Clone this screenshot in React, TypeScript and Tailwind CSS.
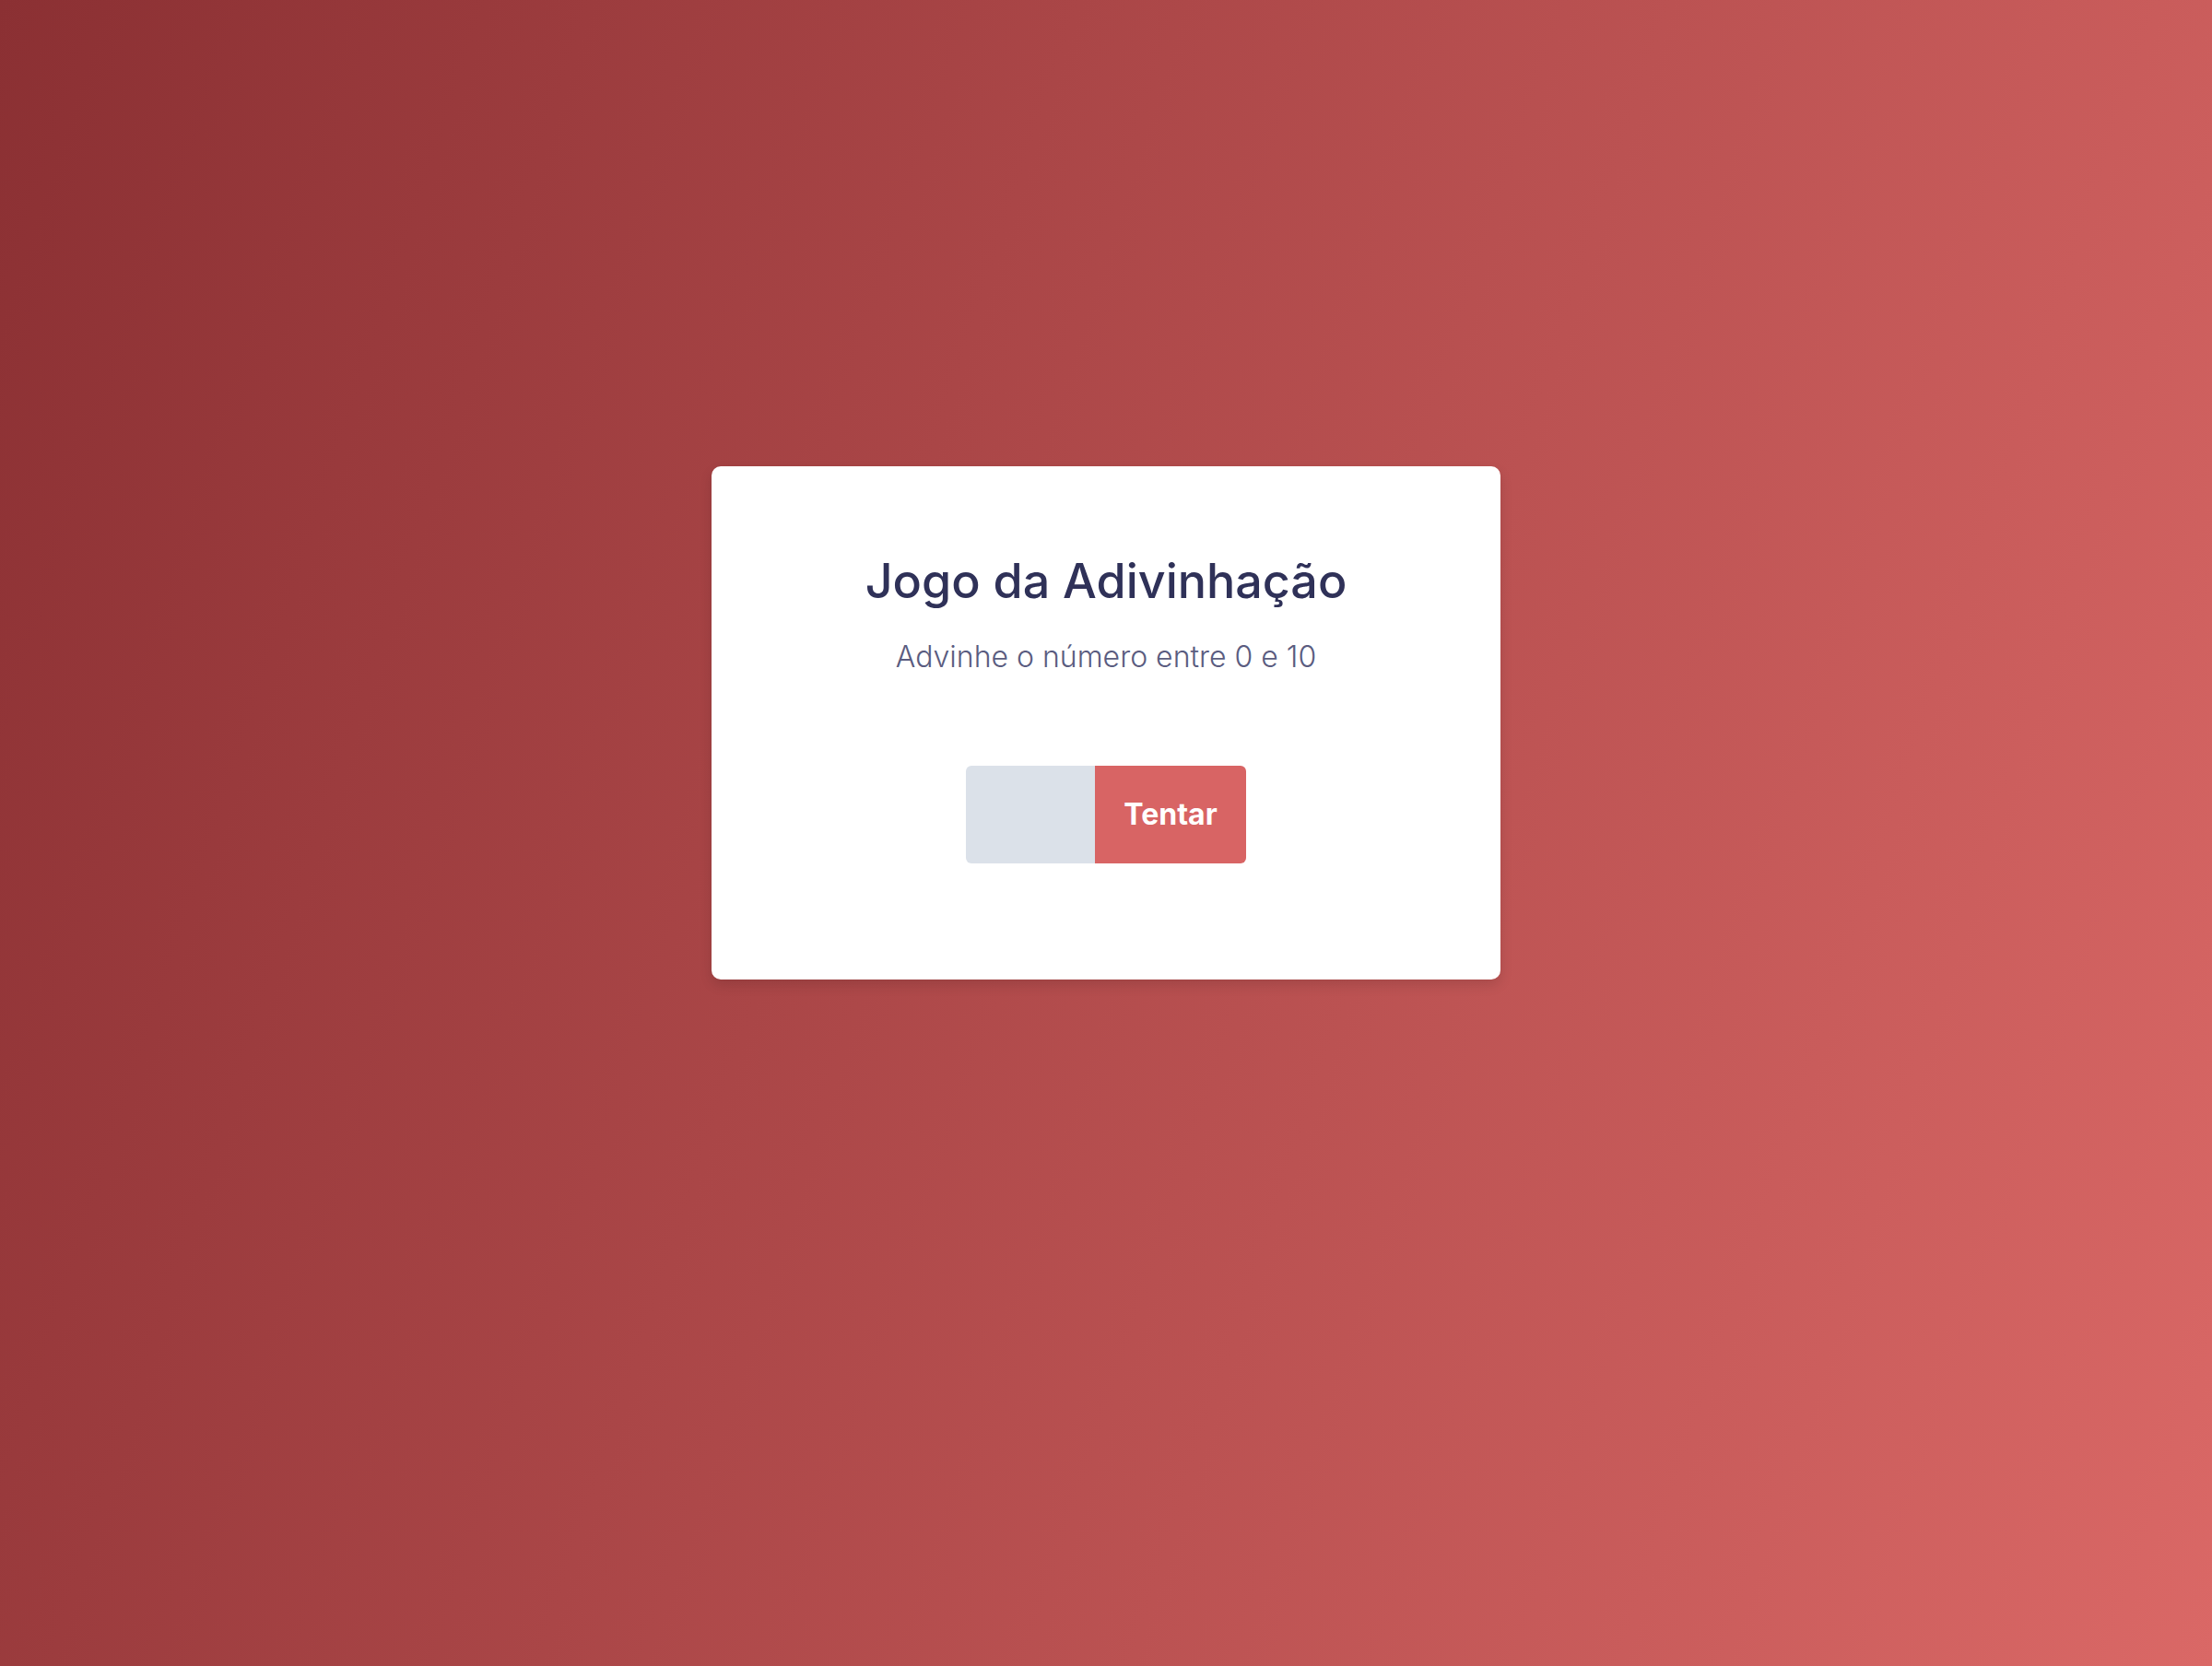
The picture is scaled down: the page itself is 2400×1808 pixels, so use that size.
export default function App() {
    return (
        <div className="min-h-screen w-full bg-[linear-gradient(108deg,#8b3033_0%,#da6866_100%)] flex justify-center pt-[506px]">
            <div className="w-[856px] h-[557px] bg-white rounded-[10px] shadow-[0_6px_14px_rgba(0,0,0,0.12)] flex flex-col items-center pt-[90px]">
                <h1 className="text-[52px] leading-[70px] font-medium text-[#2f3158] font-['Inter',sans-serif]">
                    Jogo da Adivinhação
                </h1>
                <p className="mt-[25px] text-[32px] leading-[44px] text-[#5a5c80] font-['Inter',sans-serif] font-light">
                    Advinhe o número entre 0 e 10
                </p>
                <div className="mt-[96px] flex">
                    <input
                        type="text"
                        className="w-[140px] h-[106px] bg-[#dbe1e9] rounded-l-[6px] outline-none px-4 text-[32px] font-['Inter',sans-serif]"
                    />
                    <button className="w-[164px] h-[106px] bg-[#d86464] rounded-r-[6px] text-white text-[32px] font-bold font-['Inter',sans-serif]">
                        Tentar
                    </button>
                </div>
            </div>
        </div>
    );
}
